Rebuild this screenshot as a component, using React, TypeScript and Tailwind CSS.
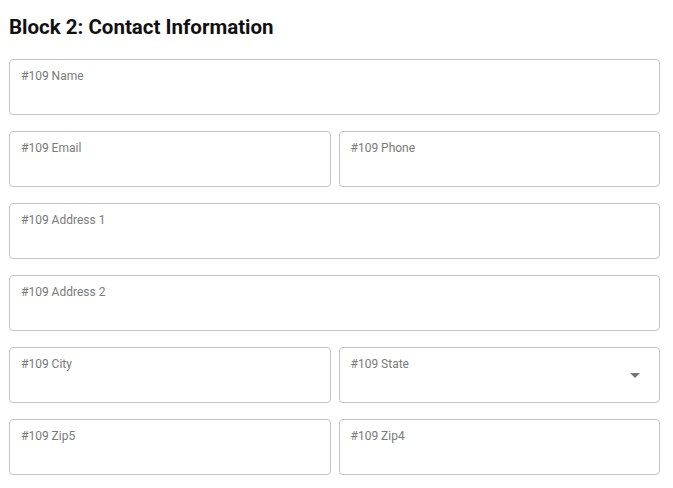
import React from 'react';

interface FieldProps {
  label: string;
  select?: boolean;
}

const Field: React.FC<FieldProps> = ({ label, select }) => (
  <div className="relative h-[56px] flex-1 rounded-[4px] border border-[#c4c4c4] bg-white pl-[11px] pt-[9px]">
    <span className="block text-[12px] leading-[14px] text-[#7a7a7a]">{label}</span>
    {select && (
      <svg
        className="absolute right-[19px] top-[25px]"
        width="10"
        height="5"
        viewBox="0 0 10 5"
      >
        <path d="M0 0 L10 0 L5 5 Z" fill="#757575" />
      </svg>
    )}
  </div>
);

const App: React.FC = () => {
  return (
    <div
      className="min-h-[488px] w-[673px] bg-white pl-[9px] pt-[15px]"
      style={{ fontFamily: 'Roboto, "Liberation Sans", sans-serif' }}
    >
      <h2 className="mb-[20px] text-[20.5px] font-bold leading-[24px] text-[#111]">
        Block 2: Contact Information
      </h2>
      <div className="flex w-[651px] flex-col gap-[16px]">
        <div className="flex">
          <Field label="#109 Name" />
        </div>
        <div className="flex gap-[8px]">
          <Field label="#109 Email" />
          <Field label="#109 Phone" />
        </div>
        <div className="flex">
          <Field label="#109 Address 1" />
        </div>
        <div className="flex">
          <Field label="#109 Address 2" />
        </div>
        <div className="flex gap-[8px]">
          <Field label="#109 City" />
          <Field label="#109 State" select />
        </div>
        <div className="flex gap-[8px]">
          <Field label="#109 Zip5" />
          <Field label="#109 Zip4" />
        </div>
      </div>
    </div>
  );
};

export default App;
